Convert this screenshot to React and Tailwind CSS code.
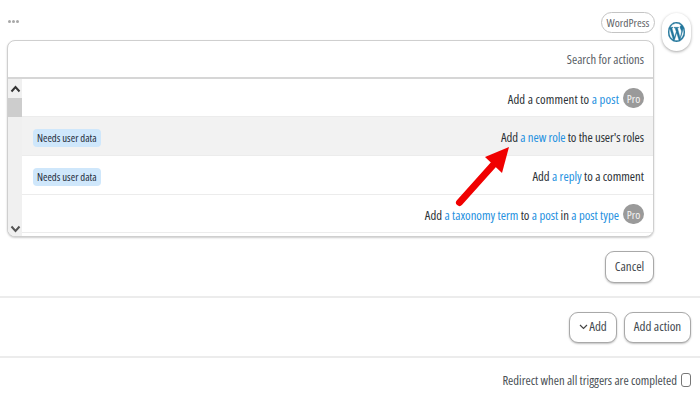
const Link = ({ children }) => <span className="text-[#2490e0]">{children}</span>;

const Pro = () => (
  <span className="ml-[4px] mt-[2px] flex h-[20px] w-[21px] items-center justify-center rounded-full bg-[#9a9a9a] text-[11.5px] text-[#f4f4f4]">Pro</span>
);

const Need = () => (
  <span className="rounded-[4px] bg-[#cfe7fb] px-[4px] py-[2px] text-[10.7px] leading-[13px] text-[#1f2d3a]">Needs user data</span>
);

const Row = ({ need, active, border = true, h, children }) => (
  <div className={`flex items-center justify-between pl-[11px] pr-[9px] ${h} ${active ? "bg-[#f2f2f2]" : "bg-white"} ${border ? "border-b border-[#ececec]" : ""}`}>
    <div>{need && <Need />}</div>
    <div className="flex items-center text-[12.7px] text-[#2c3136]">{children}</div>
  </div>
);

const Btn = ({ className, children }) => (
  <button className={`flex items-center justify-center rounded-[9px] border border-[#a9a9a9] bg-white text-[13px] text-[#444a50] shadow-[0_1px_2px_rgba(0,0,0,0.25)] ${className}`}>{children}</button>
);

export default function App() {
  return (
    <div className="relative h-[400px] w-[700px] overflow-hidden bg-white font-['Open_Sans',sans-serif] [font-stretch:75%]">
      <div className="flex h-[40px] items-start pl-[8px] pr-[9px] pt-[12px]">
        <div className="mt-[8px] flex gap-[1px]">
          <i className="h-[3px] w-[3px] rounded-full bg-[#a8a8a8]" />
          <i className="h-[3px] w-[3px] rounded-full bg-[#a8a8a8]" />
          <i className="h-[3px] w-[3px] rounded-full bg-[#a8a8a8]" />
        </div>
        <span className="ml-auto flex h-[21px] w-[54px] items-center justify-center rounded-full border border-[#c4c4c4] text-[11.5px] text-[#5f6468]">WordPress</span>
        <div className="ml-[7px] mt-px flex h-[38px] w-[29px] items-center justify-center rounded-full bg-white shadow-[0_1px_3px_rgba(0,0,0,0.35)]">
          <svg width="17" height="20" viewBox="0 0 24 24" preserveAspectRatio="none" fill="#21759b" stroke="#21759b" strokeWidth="0.5">
            <path d="M12 0a12 12 0 1 0 0 24 12 12 0 0 0 0-24zM1.700 12c0-1.500.3-2.900.9-4.200l4.900 13.500A10.300 10.300 0 0 1 1.700 12zm10.300 10.300c-1 0-2-.1-2.900-.4l3.100-9 3.200 8.700.1.2c-1.100.3-2.300.5-3.500.5zm1.400-15.100c.6 0 1.200-.1 1.200-.1.5-.1.5-.9-.1-.8 0 0-1.700.1-2.800.1-1 0-2.700-.1-2.700-.1-.6 0-.6.8-.1.8 0 0 .5.1 1.100.1l1.600 4.400-2.300 6.800-3.800-11.200c.6 0 1.200-.1 1.200-.1.5-.1.5-.9-.1-.8 0 0-1.700.1-2.800.1h-.7A10.300 10.300 0 0 1 18.900 4.300h-.1c-1 0-1.800.9-1.800 1.900 0 .9.5 1.600 1.100 2.500.4.7.9 1.600.9 3 0 .9-.4 2-.8 3.500l-1.100 3.600-3.700-11.600zm3.800 13.700l3.100-9c.6-1.500.8-2.600.8-3.700 0-.4 0-.8-.1-1.100a10.300 10.300 0 0 1-3.800 13.800z" />
          </svg>
        </div>
      </div>

      <div className="ml-[7px] h-[197px] w-[647px] overflow-hidden rounded-[8px] border border-[#cfcfcf] bg-white shadow-[0_1px_2px_rgba(0,0,0,0.2)]">
        <div className="flex h-[38px] items-center justify-end border-b-2 border-[#d6d6d6] pr-[9px] pt-[2px] text-[12.6px] text-[#5a6066]">Search for actions</div>
        <div className="flex h-[157px]">
          <div className="flex w-[14px] flex-col bg-[#f0f0f0]">
            <div className="flex h-[19px] items-center justify-center">
              <svg width="11" height="8" viewBox="0 0 11 8" fill="none" stroke="#333" strokeWidth="2"><path d="M1.500 6.500 5.500 2l4 4.500" /></svg>
            </div>
            <div className="h-[19px] bg-[#cdcdcd]" />
            <div className="flex flex-1 items-end justify-center pb-[3px]">
              <svg width="11" height="8" viewBox="0 0 11 8" fill="none" stroke="#555" strokeWidth="2"><path d="M1.500 1.500 5.500 6l4-4.500" /></svg>
            </div>
          </div>
          <div className="flex-1">
            <Row h="h-[38px]">
              <span className="pt-[4px] tracking-[0.13px]">Add a comment to&nbsp;<Link>a post</Link></span>
              <Pro />
            </Row>
            <Row h="h-[39px]" need active>
              <span className="pt-[4px] tracking-[-0.06px]">Add <Link>a new role</Link> to the user's roles</span>
            </Row>
            <Row h="h-[39px]" need>
              <span className="pt-[4px]">Add <Link>a reply</Link> to a comment</span>
            </Row>
            <Row h="h-[38px]">
              <span className="pt-[4px]">Add <Link>a taxonomy term</Link> to <Link>a post</Link> in <Link>a post type</Link></span>
              <Pro />
            </Row>
          </div>
        </div>
      </div>

      <div className="flex justify-end pr-[46px] pt-[14px]">
        <Btn className="h-[32px] w-[49px]">Cancel</Btn>
      </div>

      <div className="mt-[13px] flex h-[62px] items-center justify-end gap-[7px] border-y-2 border-[#ececec] pr-[9px]">
        <Btn className="h-[31px] w-[48px]">
          <svg width="9" height="6" viewBox="0 0 9 6" fill="none" stroke="#444" strokeWidth="1.200"><path d="M1 1l3.500 3.500L8 1" /></svg>
          <span className="ml-[1px]">Add</span>
        </Btn>
        <Btn className="h-[31px] w-[67px]">Add action</Btn>
      </div>

      <div className="flex items-center justify-end pr-[9px] pt-[14px] text-[12.6px] text-[#4a4f55]">
        <span>Redirect when all triggers are completed</span>
        <span className="ml-[4px] h-[14px] w-[10px] -translate-y-[1px] rounded-[3px] border border-[#777]" />
      </div>

      <svg className="absolute left-[450px] top-[140px]" width="64" height="70" viewBox="0 0 64 70">
        <path d="M9.500 62.500 44 24" stroke="#f00000" strokeWidth="7" strokeLinecap="round" />
        <path d="M59 7 35 17 52 33z" fill="#f00000" />
      </svg>
    </div>
  );
}
